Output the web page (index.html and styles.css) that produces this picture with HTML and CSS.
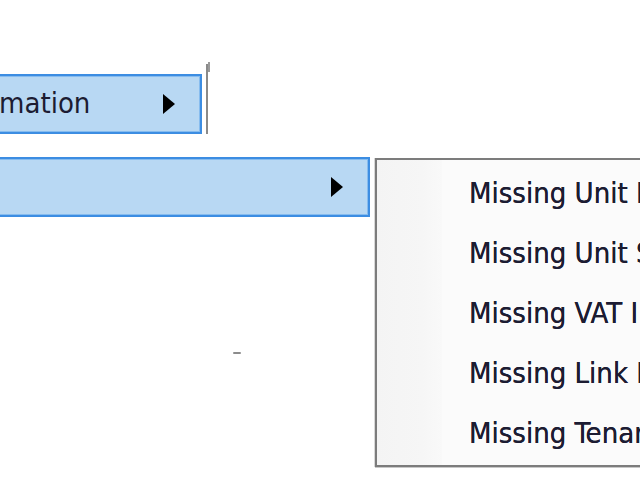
FILE: index.html
```html
<!DOCTYPE html>
<html>
<head>
<meta charset="utf-8">
<link rel="stylesheet" href="styles.css">
</head>
<body>
<div class="screen">
  <div class="row row-top">
    <div class="item item-top">
      <span class="label">mation</span>
      <span class="arrow"></span>
    </div>
    <div class="divider"><span class="tick"></span></div>
  </div>
  <div class="row row-sub">
    <div class="left">
      <div class="item item-wide">
        <span class="label"></span>
        <span class="arrow"></span>
      </div>
      <div class="speck"></div>
    </div>
    <div class="submenu">
      <div class="gutter"></div>
      <ul class="entries">
        <li>Missing Unit R</li>
        <li>Missing Unit S</li>
        <li>Missing VAT I</li>
        <li>Missing Link B</li>
        <li>Missing Tenan</li>
      </ul>
    </div>
  </div>
</div>
</body>
</html>
```

FILE: styles.css
```css
html, body {
  margin: 0;
  padding: 0;
  background: #ffffff;
}
.screen {
  width: 640px;
  height: 480px;
  overflow: hidden;
  background: #ffffff;
  font-family: "DejaVu Sans Condensed", "DejaVu Sans", sans-serif;
  font-size: 29px;
  color: #1c1c32;
}
.row {
  display: flex;
  align-items: flex-start;
}
.row-top {
  padding-top: 64px;
  height: 70px;
}
.item {
  box-sizing: border-box;
  display: flex;
  align-items: center;
  justify-content: space-between;
  height: 60px;
  margin-left: -4px;
  background: #b8d8f3;
  border: 2px solid #3c8de2;
  box-shadow: inset 0 0 0 1px #86bcef;
}
.item-top {
  width: 206px;
  margin-top: 10px;
  padding: 0 25px 0 0;
}
.item-wide {
  width: 374px;
  padding: 0 25px 0 5px;
}
.label {
  line-height: 1;
  padding-bottom: 2px;
  margin-left: 1px;
}
.arrow {
  width: 0;
  height: 0;
  border-top: 10px solid transparent;
  border-bottom: 10px solid transparent;
  border-left: 12px solid #000000;
}
.divider {
  position: relative;
  width: 2px;
  height: 70px;
  margin-left: 4px;
  background: #8a8a8a;
}
.tick {
  position: absolute;
  left: 2px;
  top: -2px;
  width: 2px;
  height: 10px;
  background: #9a9a9a;
}
.row-sub {
  padding-top: 23px;
}
.left {
  display: flex;
  flex-direction: column;
}
.speck {
  width: 8px;
  height: 2px;
  margin: 135px 0 0 233px;
  background: #8c8c8c;
  border-radius: 1px;
}
.submenu {
  box-sizing: border-box;
  display: flex;
  width: 300px;
  height: 309px;
  margin-left: 5px;
  margin-top: 1px;
  background: #fbfbfb;
  border: 2px solid #7c7c7c;
  box-shadow: 0 1px 0 #c8c8c8, -1px 0 0 #d8d8d8;
}
.gutter {
  width: 65px;
  flex: none;
  background: linear-gradient(to right, #f4f4f4, #f6f6f6 70%, #f9f9f9);
}
.entries {
  list-style: none;
  margin: 0;
  padding: 3px 0 0 27px;
  white-space: nowrap;
}
.entries li {
  height: 60px;
  line-height: 60px;
  text-shadow: 0 0 0.6px #1c1c32;
}
```
